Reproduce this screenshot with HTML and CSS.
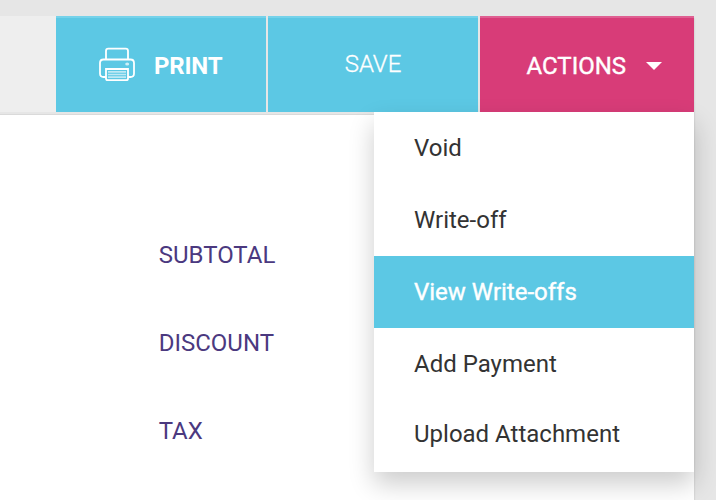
FILE: index.html
```html
<!DOCTYPE html>
<html lang="en">
<head>
<meta charset="utf-8">
<title>Invoice</title>
<link rel="stylesheet" href="styles.css">
</head>
<body>
<main class="panel">
  <header class="toolbar">
    <button class="btn btn-print">
      <svg class="printer" width="38" height="36" viewBox="0 0 38 36" fill="none" stroke="#fff" stroke-width="1.8">
        <path d="M8 12.500V4q0-2.300 2.300-2.300h17.400Q30 1.700 30 4v8.500"/>
        <path d="M8 30H5.500Q2 30 2 26.500V16q0-3.500 3.500-3.500h27Q36 12.500 36 16v10.500q0 3.500-3.500 3.500H30"/>
        <path d="M8 22h22v9.500q0 1.700-1.700 1.700H9.700Q8 33.200 8 31.500z"/>
        <path d="M10 24.800h18M10 27.500h18M10 30.200h18" stroke-width="1.700" opacity=".6"/>
        <ellipse cx="29.200" cy="17" rx="2" ry="1.600" fill="#fff" stroke="none" opacity=".7"/>
      </svg>
      <span class="label">PRINT</span>
    </button>
    <button class="btn btn-save"><span class="label">SAVE</span></button>
    <div class="dropdown">
      <button class="btn btn-actions"><span class="label">ACTIONS</span><span class="caret"></span></button>
      <ul class="menu">
        <li>Void</li>
        <li>Write-off</li>
        <li class="active">View Write-offs</li>
        <li>Add Payment</li>
        <li class="last">Upload Attachment</li>
      </ul>
    </div>
  </header>
  <section class="totals">
    <div>SUBTOTAL</div>
    <div>DISCOUNT</div>
    <div>TAX</div>
  </section>
</main>
</body>
</html>
```
FILE: styles.css
```css
* { box-sizing: border-box; }

body {
  margin: 0;
  height: 500px;
  padding-top: 16px;
  overflow: hidden;
  background: #e6e6e6;
  font: 24px/28px Roboto, sans-serif;
}

.panel {
  width: 694px;
  height: 484px;
  background: #fff;
  box-shadow: 0 2px 2px rgba(0, 0, 0, .18);
}

.toolbar {
  display: flex;
  justify-content: flex-end;
  align-items: flex-start;
  gap: 2px;
  height: 99px;
  background: linear-gradient(#eee 96px, #e6e6e6 96px);
  border-bottom: 1px solid #dadada;
}

.btn {
  display: flex;
  align-items: center;
  width: 210px;
  height: 96px;
  margin: 0;
  padding: 0;
  border: 0;
  border-top: 2px solid #75d2ea;
  border-radius: 0;
  background: #5cc8e4;
  color: #fff;
  font: inherit;
  box-shadow: 2px 0 #e6e6e6;
}

.btn-print {
  padding-left: 42px;
  gap: 18px;
  font-weight: 700;
  letter-spacing: -.2px;
}

.btn-print .label { padding-top: 2px; }

.btn-save {
  justify-content: center;
  padding-bottom: 2px;
  font-weight: 300;
  -webkit-text-stroke: .3px #fff;
}

.btn-actions {
  width: 214px;
  padding: 2px 0 0 46.500px;
  gap: 19.500px;
  background: #d83c78;
  border-top-color: #df6092;
  box-shadow: none;
  -webkit-text-stroke: .4px #fff;
}

.caret {
  border: 8px solid transparent;
  border-top-color: #fff;
  border-bottom: 0;
}

.dropdown { position: relative; }

.menu {
  position: absolute;
  top: 96px;
  right: 0;
  width: 320px;
  margin: 0;
  padding: 0;
  list-style: none;
  background: #fff;
  color: #333;
  box-shadow: 0 12px 24px rgba(0, 0, 0, .2);
}

.menu li {
  height: 72px;
  padding: 22px 40px;
}

.menu .active {
  background: #5cc8e4;
  color: #fff;
  -webkit-text-stroke: .4px #fff;
}

.menu .last { padding-top: 20px; }

.totals {
  display: grid;
  gap: 60px;
  padding: 126px 0 0 158.700px;
  color: #4b397f;
}
```
